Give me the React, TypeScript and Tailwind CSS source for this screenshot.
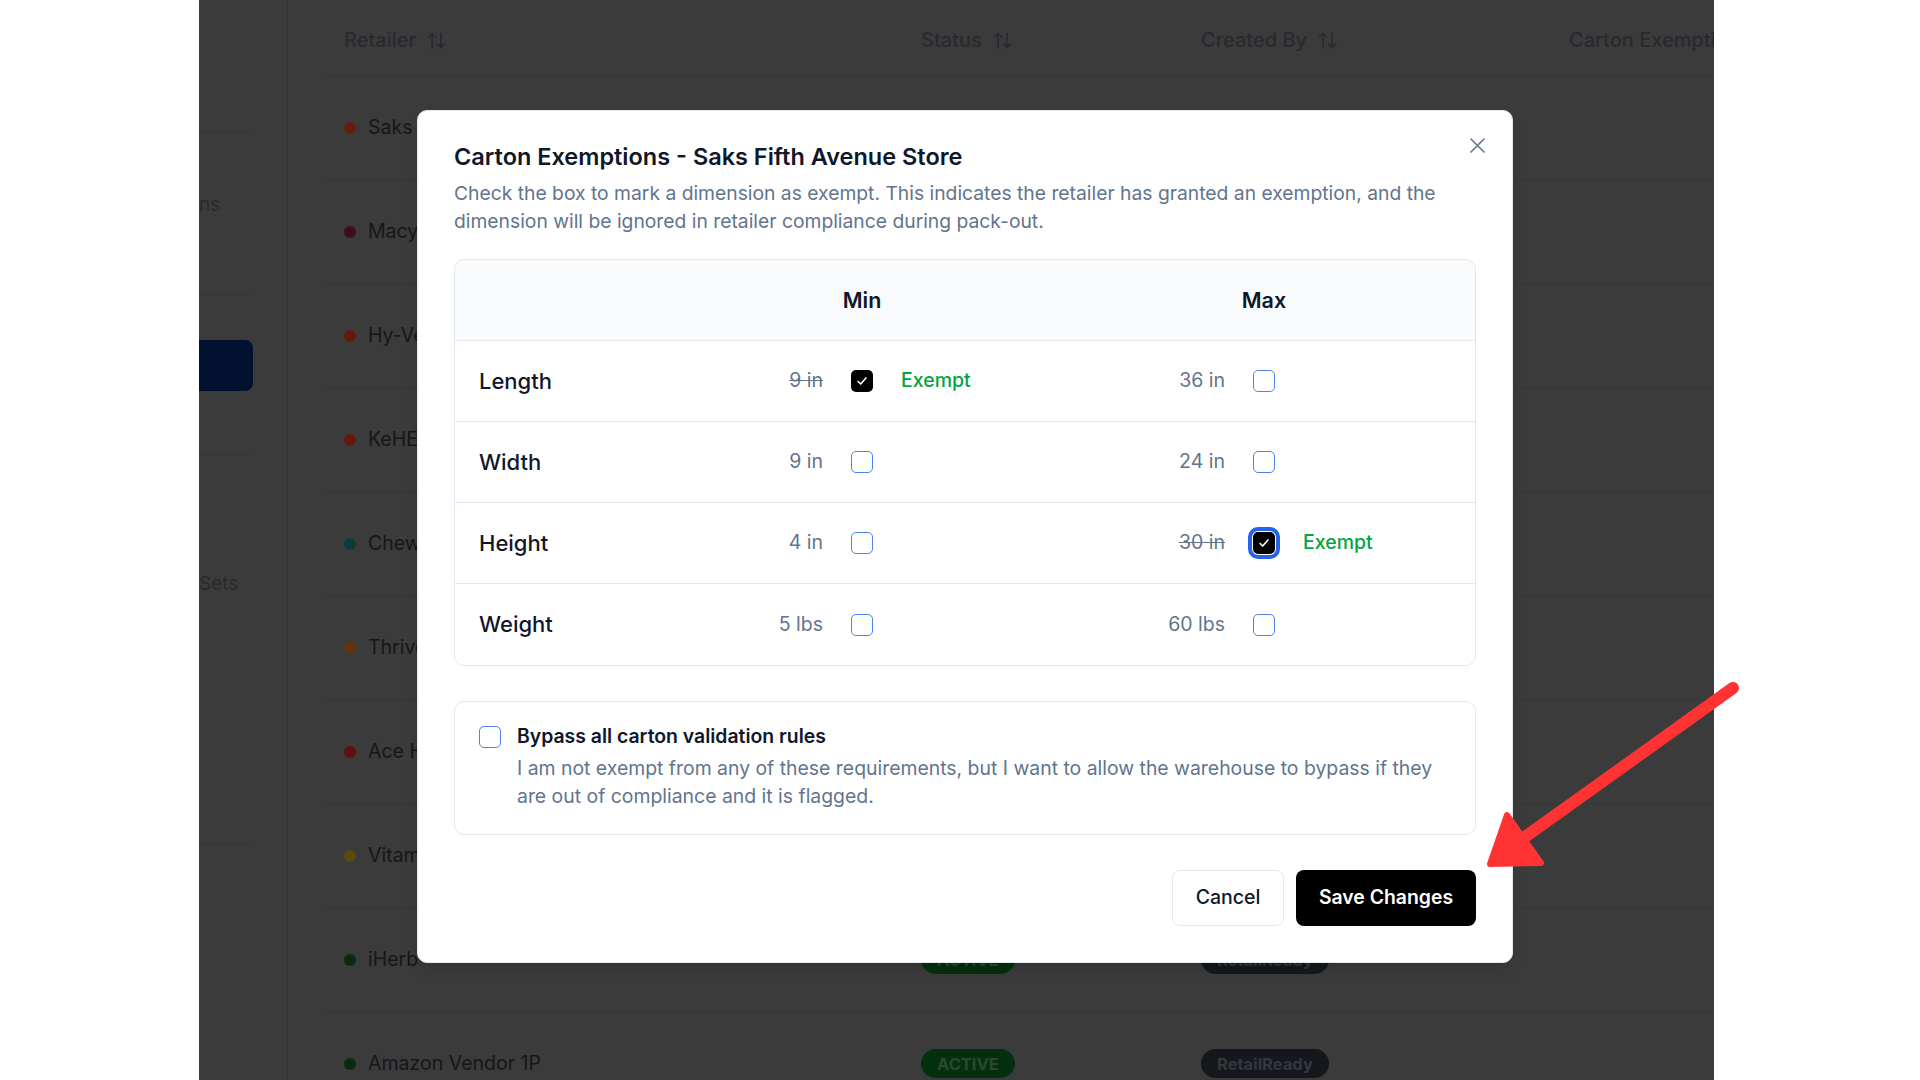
import { ArrowUpDown } from 'lucide-react';

// rows under the dialog keep their tags out of the way; only the last two are visible
const retailers = [
  { name: 'Saks Fifth Avenue Store', dot: 'bg-[#641c0e]', tags: false },
  { name: "Macy's", dot: 'bg-[#3f0d1e]', tags: false },
  { name: 'Hy-Vee', dot: 'bg-[#64190c]', tags: false },
  { name: 'KeHE Distributors', dot: 'bg-[#64190c]', tags: false },
  { name: 'Chewy', dot: 'bg-[#0e3a3a]', tags: false },
  { name: 'Thrive Market', dot: 'bg-[#64330d]', tags: false },
  { name: 'Ace Hardware', dot: 'bg-[#640f0f]', tags: false },
  { name: 'Vitamin Shoppe', dot: 'bg-[#5a4a0b]', tags: false },
  { name: 'iHerb', dot: 'bg-[#0b2a0e]', tags: true },
  { name: 'Amazon Vendor 1P', dot: 'bg-[#0b2a0e]', tags: true },
];

const dims = [
  { label: 'Length', min: '9 in', max: '36 in', minExempt: true, maxExempt: false, focus: false },
  { label: 'Width', min: '9 in', max: '24 in', minExempt: false, maxExempt: false, focus: false },
  { label: 'Height', min: '4 in', max: '30 in', minExempt: false, maxExempt: true, focus: true },
  { label: 'Weight', min: '5 lbs', max: '60 lbs', minExempt: false, maxExempt: false, focus: false },
];

function Checkbox({ checked, focus }: { checked?: boolean; focus?: boolean }) {
  if (checked) {
    return (
      <span
        className={`flex h-[22px] w-[22px] items-center justify-center rounded-[5px] bg-black ${
          focus ? 'ring-4 ring-[#2563eb] ring-offset-1' : ''
        }`}
      >
        <svg viewBox="0 0 16 16" className="h-[14px] w-[14px]" fill="none" stroke="white" strokeWidth="1.8" strokeLinecap="round" strokeLinejoin="round">
          <path d="M3.5 8.5l3 3 6-7" />
        </svg>
      </span>
    );
  }
  return <span className="block h-[22px] w-[22px] shrink-0 rounded-[5px] border-[1.5px] border-[#4b82f5] bg-white" />;
}

function LimitCell({ value, exempt, focus }: { value: string; exempt: boolean; focus: boolean }) {
  return (
    <div className="grid grid-cols-[1fr_22px_1fr] items-center gap-7">
      <span className={`justify-self-end text-[19.5px] text-slate-500 ${exempt ? 'line-through' : ''}`}>{value}</span>
      <Checkbox checked={exempt} focus={focus} />
      {exempt ? <span className="text-[19.5px] font-medium text-green-600">Exempt</span> : <span />}
    </div>
  );
}

function Sidebar() {
  return (
    <aside className="w-[89px] shrink-0 border-r border-[#343434] text-[19px] text-[#2a2a2a]">
      <div className="w-[54px]">
        <div className="h-[133px] border-b border-[#363636]" />
        <div className="h-[162px] border-b border-[#363636] pt-[60px] leading-6">ns</div>
        <div className="h-[160px] border-b border-[#363636] pt-[45px]">
          <div className="h-[51px] rounded-r-lg bg-[#02112f]" />
        </div>
        <div className="h-[390px] border-b border-[#363636] pt-[117px] leading-6">Sets</div>
      </div>
    </aside>
  );
}

function BackgroundTable() {
  return (
    <main className="flex-1 pl-[34px]">
      <div className="flex h-[76px] items-center border-b border-[#363636] pt-[5px] text-[20px] font-medium text-[#272a2f]">
        <div className="flex w-[577px] items-center gap-[10px] px-[22px]">
          Retailer <ArrowUpDown size={21} />
        </div>
        <div className="flex w-[280px] items-center gap-[10px] px-[22px]">
          Status <ArrowUpDown size={21} />
        </div>
        <div className="flex w-[368px] items-center gap-[10px] px-[22px]">
          Created By <ArrowUpDown size={21} />
        </div>
        <div className="flex items-center gap-[10px] whitespace-nowrap px-[22px]">Carton Exemptions</div>
      </div>
      {retailers.map(r => (
        <div key={r.name} className="flex h-[104px] items-center border-b border-[#363636] text-[19.5px]">
          <div className="flex w-[577px] items-center gap-3 px-[22px] text-[#161618]">
            <span className={`h-3 w-3 rounded-full ${r.dot}`} />
            {r.name}
          </div>
          {r.tags && (
            <>
              <div className="w-[280px] px-[22px]">
                <span className="inline-flex h-[29px] items-center rounded-full bg-[#04300d] px-4 text-[16.5px] font-bold text-[#2d4730]">ACTIVE</span>
              </div>
              <div className="w-[368px] px-[22px]">
                <span className="inline-flex h-[29px] items-center rounded-full bg-[#14181c] px-4 text-[16.5px] font-bold text-[#33373b]">RetailReady</span>
              </div>
            </>
          )}
        </div>
      ))}
    </main>
  );
}

function Modal() {
  return (
    <div className="absolute left-[417px] top-[110px] w-[1096px] rounded-[10px] border border-slate-200 bg-white px-9 pb-9 pt-8 shadow-lg">
      <button className="absolute right-[27px] top-[27px] text-slate-500">
        <svg width="15" height="15" viewBox="0 0 15 15" fill="none" stroke="currentColor" strokeWidth="1.6" strokeLinecap="round">
          <path d="M1 1l13 13M14 1L1 14" />
        </svg>
      </button>
      <h2 className="text-[23.5px] font-semibold leading-7 text-slate-900">Carton Exemptions - Saks Fifth Avenue Store</h2>
      <p className="mt-2 text-[19.3px] leading-7 text-slate-500">
        Check the box to mark a dimension as exempt. This indicates the retailer has granted an exemption, and the dimension will be ignored in
        retailer compliance during pack-out.
      </p>

      {/* Dimensions */}
      <div className="mt-6 overflow-hidden rounded-[10px] border border-slate-200">
        <div className="grid h-[81px] grid-cols-[206px_402px_402px] items-center border-b border-slate-200 bg-slate-50 text-[21.5px] font-semibold text-slate-900">
          <div />
          <div className="text-center">Min</div>
          <div className="text-center">Max</div>
        </div>
        {dims.map((d, i) => (
          <div
            key={d.label}
            className={`grid h-[81px] grid-cols-[206px_402px_402px] items-center ${i < dims.length - 1 ? 'border-b border-slate-200' : ''}`}
          >
            <div className="pl-6 text-[22px] font-medium text-slate-900">{d.label}</div>
            <LimitCell value={d.min} exempt={d.minExempt} focus={false} />
            <LimitCell value={d.max} exempt={d.maxExempt} focus={d.focus} />
          </div>
        ))}
      </div>

      {/* Bypass */}
      <div className="mt-[35px] flex gap-4 rounded-[10px] border border-slate-200 p-6">
        <Checkbox />
        <div>
          <div className="-mt-[2px] text-[19.4px] font-semibold leading-6 text-slate-900">Bypass all carton validation rules</div>
          <p className="mt-[6px] text-[19.4px] leading-7 text-slate-500">
            I am not exempt from any of these requirements, but I want to allow the warehouse to bypass if they are out of compliance and it is
            flagged.
          </p>
        </div>
      </div>

      <div className="mt-[35px] flex justify-end gap-3">
        <button className="h-14 w-[112px] rounded-lg border border-slate-200 bg-white text-[19.5px] font-medium text-slate-900">Cancel</button>
        <button className="h-14 w-[180px] rounded-lg bg-black text-[19.4px] font-semibold text-white">Save Changes</button>
      </div>
    </div>
  );
}

function Arrow() {
  return (
    <svg className="absolute left-[1470px] top-[670px]" width="290" height="220" viewBox="0 0 290 220" fill="none">
      <line x1="263" y1="18" x2="48" y2="172" stroke="#ff3333" strokeWidth="12" strokeLinecap="round" />
      <polygon points="20,194 37,145 71,193" fill="#ff3333" stroke="#ff3333" strokeWidth="6" strokeLinejoin="round" />
    </svg>
  );
}

export default function App() {
  return (
    <div className="relative h-[1080px] w-[1920px] overflow-hidden bg-white font-['Inter',sans-serif]">
      <div className="ml-[199px] flex h-full w-[1515px] overflow-hidden bg-[#3b3b3b]">
        <Sidebar />
        <BackgroundTable />
      </div>
      <Modal />
      <Arrow />
    </div>
  );
}
